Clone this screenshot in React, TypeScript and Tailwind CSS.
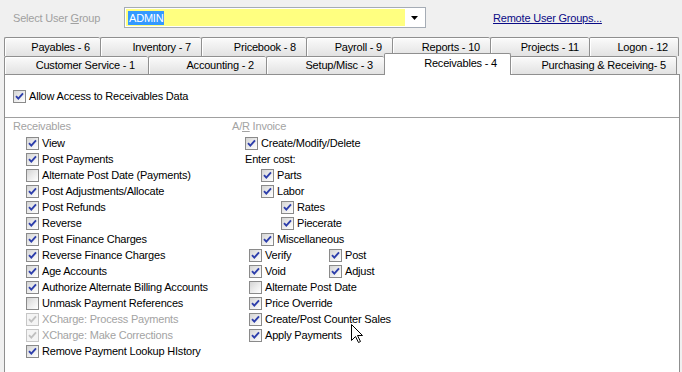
import React from 'react';

type S = 'on' | 'off' | 'dis';

function Cb({ s }: { s: S }) {
  const dis = s === 'dis';
  return (
    <span
      className={
        dis
          ? 'w-[13px] h-[13px] shrink-0 border border-[#c6c6c6] bg-[#f4f4f4] flex items-center justify-center'
          : 'w-[13px] h-[13px] shrink-0 border border-[#8a8a8a] bg-gradient-to-br from-[#d4d4d4] via-[#ebebeb] to-white flex items-center justify-center'
      }
    >
      {s !== 'off' && (
        <svg width="11" height="11" viewBox="0 0 11 11">
          <path d="M2 5.2 L4.3 7.6 L9 2.4" fill="none" stroke={dis ? '#c0c0c0' : '#2d3eab'} strokeWidth="1.9" />
        </svg>
      )}
    </span>
  );
}

function Item({ s, label, cls = '' }: { s: S; label: string; cls?: string }) {
  return (
    <div className={`h-[16px] flex items-center gap-[3px] ${cls}`}>
      <Cb s={s} />
      <span className={s === 'dis' ? 'text-[#a3a3a3] leading-[13px] whitespace-nowrap' : 'leading-[13px] whitespace-nowrap'}>{label}</span>
    </div>
  );
}

const row1 = [
  { label: 'Payables - 6', w: 'w-[96px]' },
  { label: 'Inventory - 7', w: 'w-[101px]' },
  { label: 'Pricebook - 8', w: 'w-[105px]' },
  { label: 'Payroll - 9', w: 'w-[86px]' },
  { label: 'Reports - 10', w: 'w-[98px]' },
  { label: 'Projects - 11', w: 'w-[99px]' },
  { label: 'Logon - 12', w: 'w-[90px] border-r' },
];

const tabBase =
  'h-full shrink-0 border-t border-l border-[#8f8f8f] bg-gradient-to-b from-[#fbfbfb] to-[#e2e2e2] flex items-center justify-end rounded-tl-[2px] rounded-tr-[2px] shadow-[inset_1px_1px_0_#ffffff] whitespace-nowrap leading-[13px]';

const left: { s: S; label: string }[] = [
  { s: 'on', label: 'View' },
  { s: 'on', label: 'Post Payments' },
  { s: 'off', label: 'Alternate Post Date (Payments)' },
  { s: 'on', label: 'Post Adjustments/Allocate' },
  { s: 'on', label: 'Post Refunds' },
  { s: 'on', label: 'Reverse' },
  { s: 'on', label: 'Post Finance Charges' },
  { s: 'on', label: 'Reverse Finance Charges' },
  { s: 'on', label: 'Age Accounts' },
  { s: 'on', label: 'Authorize Alternate Billing Accounts' },
  { s: 'off', label: 'Unmask Payment References' },
  { s: 'dis', label: 'XCharge: Process Payments' },
  { s: 'dis', label: 'XCharge: Make Corrections' },
  { s: 'on', label: 'Remove Payment Lookup HIstory' },
];

export default function App() {
  return (
    <div className="relative w-[682px] h-[372px] overflow-hidden bg-[#f0f0f0] font-['Liberation_Sans',Arial,sans-serif] text-[11px] tracking-[-0.2px] text-black flex flex-col">
      {/* top bar */}
      <div className="h-[37px] shrink-0 flex items-start">
        <div className="w-[124px] shrink-0 pl-[13px] pt-[12px] leading-[13px] text-[#a0a0a0] whitespace-nowrap">
          Select User <span className="underline">G</span>roup
        </div>
        <div className="mt-[7px] w-[302px] h-[21px] shrink-0 border border-[#a5acb5] bg-white flex p-px">
          <div className="flex-1 bg-[#ffff80] flex items-center pl-[2px]">
            <span className="bg-[#3399ff] text-white px-px leading-[14px]">ADMIN</span>
          </div>
          <div className="w-[19px] flex items-center justify-center bg-white">
            <svg width="7" height="4" viewBox="0 0 7 4">
              <path d="M0 0 H7 L3.5 4 Z" fill="#000" />
            </svg>
          </div>
        </div>
        <div className="ml-[67px] pt-[12px] leading-[13px] text-[#0b0b86] underline whitespace-nowrap">Remote User Groups...</div>
      </div>

      {/* tab row 1 */}
      <div className="h-[19px] shrink-0 flex pl-[4px]">
        {row1.map((t) => (
          <div key={t.label} className={`${tabBase} ${t.w} pr-[10px]`}>
            {t.label}
          </div>
        ))}
      </div>

      {/* tab row 2 */}
      <div className="h-[18px] shrink-0 flex pl-[4px]">
        <div className={`${tabBase} w-[144px] pr-[13px]`}>Customer Service - 1</div>
        <div className={`${tabBase} w-[118px] pr-[12px]`}>Accounting - 2</div>
        <div className={`${tabBase} w-[118px] pr-[11px]`}>Setup/Misc - 3</div>
        <div className="relative z-10 -mt-[3px] h-[22px] w-[127px] -mr-px shrink-0 bg-white border-t border-l border-r border-[#8f8f8f] rounded-tl-[2px] rounded-tr-[2px] flex items-start justify-end pr-[13px] pt-[3px] leading-[13px] whitespace-nowrap">
          Receivables - 4
        </div>
        <div className={`${tabBase} w-[167px] border-r pr-[10px]`}>Purchasing &amp; Receiving- 5</div>
      </div>

      {/* panel */}
      <div className="flex-1 ml-[4px] w-[676px] bg-white border-t border-l border-r border-[#8f8f8f] flex flex-col">
        <div className="pt-[13px] pl-[8px]">
          <Item s="on" label="Allow Access to Receivables Data" />
        </div>
        <div className="mt-[13px] h-px bg-[#a0a0a0]" />
        <div className="flex">
          <div className="w-[227px] shrink-0 pl-[8px]">
            <div className="h-[17px] flex items-center text-[#a3a3a3] leading-[13px]">Receivables</div>
            <div className="pl-[13px]">
              {left.map((it) => (
                <Item key={it.label} s={it.s} label={it.label} />
              ))}
            </div>
          </div>
          <div className="flex-1">
            <div className="h-[17px] flex items-center text-[#a3a3a3] leading-[13px]">
              A/<span className="underline">R</span>&nbsp;Invoice
            </div>
            <Item s="on" label="Create/Modify/Delete" cls="pl-[13px]" />
            <div className="h-[16px] flex items-center pl-[13px] leading-[13px]">Enter cost:</div>
            <Item s="on" label="Parts" cls="pl-[29px]" />
            <Item s="on" label="Labor" cls="pl-[29px]" />
            <Item s="on" label="Rates" cls="pl-[49px]" />
            <Item s="on" label="Piecerate" cls="pl-[49px]" />
            <Item s="on" label="Miscellaneous" cls="pl-[29px]" />
            <div className="flex pl-[17px]">
              <Item s="on" label="Verify" cls="w-[80px]" />
              <Item s="on" label="Post" />
            </div>
            <div className="flex pl-[17px]">
              <Item s="on" label="Void" cls="w-[80px]" />
              <Item s="on" label="Adjust" />
            </div>
            <Item s="off" label="Alternate Post Date" cls="pl-[17px]" />
            <Item s="on" label="Price Override" cls="pl-[17px]" />
            <Item s="on" label="Create/Post Counter Sales" cls="pl-[17px]" />
            <Item s="on" label="Apply Payments" cls="pl-[17px]" />
          </div>
        </div>
      </div>

      {/* mouse cursor overlay */}
      <svg className="absolute left-[351px] top-[324px]" width="13" height="20" viewBox="0 0 13 20">
        <path d="M0.5 0.5 V16.5 L4.5 12.5 L7.5 18.5 L9.5 17.5 L6.5 11.5 H11.5 Z" fill="#fff" stroke="#000" strokeWidth="1" />
      </svg>
    </div>
  );
}
